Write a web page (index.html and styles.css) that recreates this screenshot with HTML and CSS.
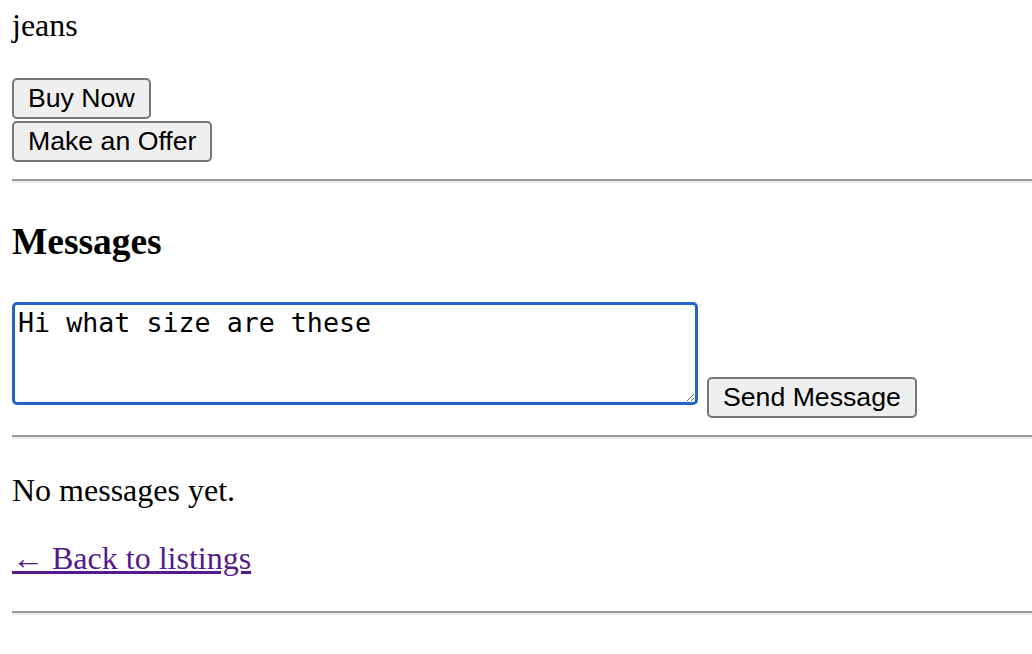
FILE: index.html
```html
<!DOCTYPE html>
<html lang="en">
<head>
<meta charset="utf-8">
<title>jeans</title>
<link rel="stylesheet" href="styles.css">
</head>
<body>
<main class="page">
  <p class="title">jeans</p>
  <div class="actions">
    <button class="btn" type="button">Buy Now</button>
    <button class="btn" type="button">Make an Offer</button>
  </div>
  <hr class="rule rule-top">
  <h3 class="heading">Messages</h3>
  <form class="compose">
    <textarea class="message-box" autofocus>Hi what size are these </textarea>
    <button class="btn" type="button">Send Message</button>
  </form>
  <hr class="rule rule-mid">
  <p class="empty">No messages yet.</p>
  <p class="back"><a class="back-link" href="#">← Back to listings</a></p>
  <hr class="rule rule-bottom">
</main>
</body>
</html>
```

FILE: styles.css
```css
html, body {
  margin: 0;
  padding: 0;
  background: #ffffff;
}

body {
  font-family: "Liberation Serif", "Times New Roman", serif;
  font-size: 32px;
  color: #000000;
}

.page {
  padding: 0 0 0 12px;
  display: flex;
  flex-direction: column;
  align-items: flex-start;
}

.title {
  margin: 7px 0 34px;
  line-height: 37px;
}

.actions {
  display: flex;
  flex-direction: column;
  align-items: flex-start;
  gap: 2px;
}

.btn {
  font-family: "Liberation Sans", Arial, sans-serif;
  font-size: 26.67px;
  line-height: 31px;
  height: 41px;
  padding: 0 14px;
  border: 2px solid #767676;
  border-radius: 5px;
  background: #efefef;
  color: #000000;
  cursor: default;
}

.rule {
  align-self: stretch;
  height: 0;
  border: 0;
  border-top: 2px solid #9b9b9b;
  border-bottom: 2px solid #ececec;
  margin: 0;
}

.rule-top {
  margin: 17px 0 37px;
}

.heading {
  margin: 0 0 39px;
  font-size: 37.44px;
  line-height: 43px;
  font-weight: bold;
}

.compose {
  display: flex;
  align-items: flex-end;
  gap: 9px;
  margin: 0;
}

.message-box {
  box-sizing: border-box;
  width: 686px;
  height: 103px;
  margin: 0 0 13px;
  padding: 2px 3px;
  border: 3px solid #2463c8;
  border-radius: 5px;
  outline: none;
  font-family: "DejaVu Sans Mono", monospace;
  font-size: 26.67px;
  line-height: normal;
  color: #000000;
  background: #ffffff;
  resize: both;
}

.rule-mid {
  margin: 17px 0 0;
}

.empty {
  margin: 33px 0 0;
  line-height: 37px;
}

.back {
  margin: 31px 0 0;
  line-height: 37px;
}

.back-link {
  color: #551a8b;
  text-decoration: underline;
}

.rule-bottom {
  margin: 34px 0 40px;
}
```
